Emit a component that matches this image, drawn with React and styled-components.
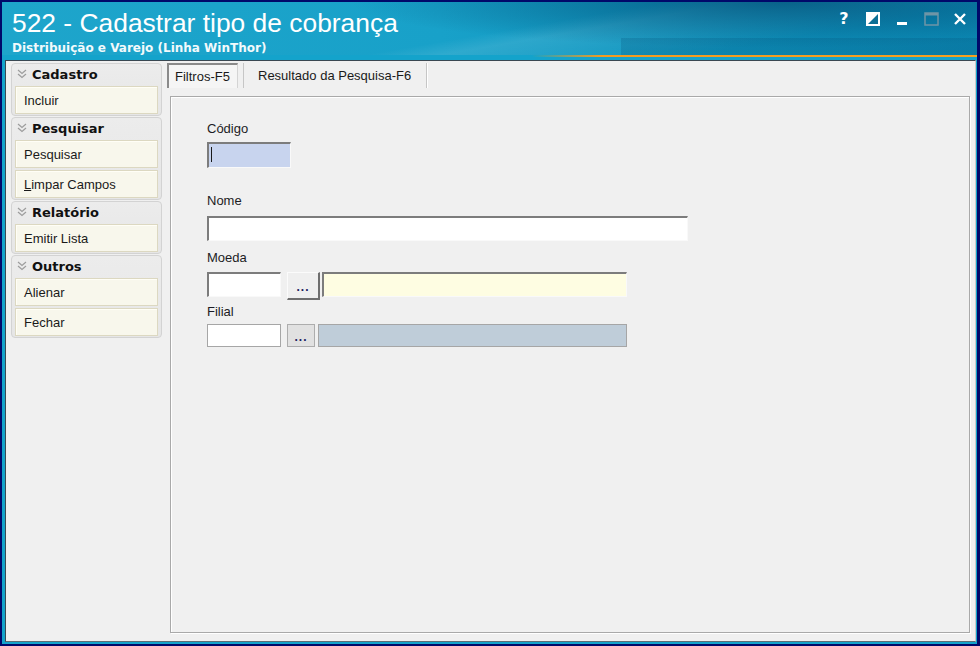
import React from 'react'
import styled, { createGlobalStyle } from 'styled-components'

const GlobalStyle = createGlobalStyle`
  html, body {
    margin: 0;
    padding: 0;
    overflow: hidden;
  }
  body {
    font-family: "Liberation Sans", Arial, sans-serif;
  }
  * {
    box-sizing: border-box;
  }
`

const Window = styled.div`
  width: 980px;
  height: 646px;
  background: #00086a;
  padding: 2px 3px 2px 2px;
  display: flex;
`

const Frame = styled.div`
  flex: 1;
  display: flex;
  flex-direction: column;
  background: #14a3cb;
  min-width: 0;
`

const TitleBar = styled.div`
  height: 53px;
  display: flex;
  justify-content: space-between;
  background:
    linear-gradient(rgba(0, 75, 115, 0.22), rgba(0, 75, 115, 0.22)) 619px 36px / 356px 17px no-repeat,
    radial-gradient(ellipse 430px 46px at 80% 0%, rgba(4, 88, 128, 0.85), rgba(4, 88, 128, 0) 100%),
    linear-gradient(170deg, rgba(255, 255, 255, 0) 52%, rgba(255, 255, 255, 0.1) 58%, rgba(255, 255, 255, 0) 78%),
    linear-gradient(to right, #1ea5cb 0%, #18a1c9 45%, #0f93bd 75%, #0b88b3 100%);
`

const TitleText = styled.div`
  padding: 8px 0 0 10px;
  color: #fff;
`

const AppName = styled.div`
  font-family: "Liberation Sans", Arial, sans-serif;
  font-size: 26.4px;
  line-height: 26px;
`

const SubName = styled.div`
  margin-top: 5px;
  font-family: "DejaVu Sans", Verdana, sans-serif;
  font-weight: bold;
  font-size: 12px;
  line-height: 14px;
  color: #f2fafc;
`

const Controls = styled.div`
  display: flex;
  gap: 7px;
  padding: 9px 6px 0 0;
  height: 30px;
`

const ControlButton = styled.div`
  width: 22px;
  height: 16px;
  display: flex;
  align-items: center;
  justify-content: center;
  color: #fff;
  font-family: "DejaVu Sans", sans-serif;
  font-weight: bold;
  font-size: 16px;
  line-height: 16px;
`

const Stripe = styled.div`
  height: 2px;
  background: linear-gradient(to right, rgba(242, 155, 33, 0) 0, rgba(242, 155, 33, 0) 530px, #f29b21 600px, #f6a020 100%);
`

const Body = styled.div`
  flex: 1;
  min-height: 0;
  margin: 3px 1px 2px 3px;
  background: #f0f0f0;
  border-top: 1px solid #3a4852;
  border-left: 1px solid #3a4852;
  border-bottom: 1px solid #5e6e75;
  border-right: 1px solid #c9c9c9;
  display: flex;
  padding: 2px 5px 8px 5px;
`

const Sidebar = styled.div`
  width: 151px;
  flex-shrink: 0;
  display: flex;
  flex-direction: column;
  gap: 1px;
`

const Group = styled.div`
  border: 1px solid #d3d3d3;
  border-radius: 4px;
  background: linear-gradient(#ececec, #e6e6e6);
  padding: 0 3px 1px 3px;
  display: flex;
  flex-direction: column;
  gap: 2px;
`

const GroupHeader = styled.div`
  height: 20px;
  display: flex;
  align-items: center;
  gap: 5px;
  padding-left: 2px;
  font-family: "DejaVu Sans", Verdana, sans-serif;
  font-weight: bold;
  font-size: 13px;
  color: #111;
`

const SideButton = styled.div`
  height: 28px;
  display: flex;
  align-items: center;
  padding-left: 8px;
  background: #f8f7ec;
  border: 1px solid #dcd8c1;
  box-shadow: inset 1px 1px 0 #fffef6;
  font-size: 13px;
  color: #1a1a1a;
  u {
    text-decoration: underline;
  }
`

const Main = styled.div`
  flex: 1;
  margin-left: 5px;
  display: flex;
  flex-direction: column;
  min-width: 0;
`

const TabList = styled.div`
  height: 25px;
  display: flex;
`

const Tab = styled.div`
  height: 25px;
  display: flex;
  align-items: center;
  font-size: 13px;
  color: #1a1a1a;
  width: ${p => p.$width}px;
  margin-left: ${p => (p.$active ? 0 : 5)}px;
  padding-left: ${p => (p.$active ? 6 : 14)}px;
  background: ${p => (p.$active ? '#f5f5f5' : 'transparent')};
  border-style: solid;
  border-width: ${p => (p.$active ? '2px 1px 0 2px' : '0 1px 0 1px')};
  border-color: ${p => (p.$active ? '#8a8a8a #d4d4d4 transparent #8a8a8a' : '#c6c6c6')};
  box-shadow: ${p => (p.$active ? 'none' : '1px 0 0 #fff')};
`

const Panel = styled.div`
  flex: 1;
  margin: 8px 0 0 3px;
  border: 1px solid #a9a9a9;
  box-shadow: inset 1px 1px 0 #fff, 1px 1px 0 #fff;
  padding: 24px 0 0 36px;
`

const FieldLabel = styled.div`
  font-size: 13px;
  line-height: 15px;
  color: #1c1c24;
  margin-top: ${p => p.$gap}px;
`

const Row = styled.div`
  display: flex;
  align-items: flex-start;
  margin-top: ${p => p.$gap}px;
`

const TextBox = styled.div`
  width: ${p => p.$width}px;
  height: ${p => p.$height}px;
  margin-top: ${p => p.$gap || 0}px;
  margin-left: ${p => p.$left || 0}px;
  background: ${p => p.$bg || '#fff'};
  border-style: solid;
  border-width: ${p => (p.$flat ? '1px' : '2px 1px 1px 2px')};
  border-color: ${p => (p.$flat ? '#a6a6a6' : '#7c7c7c #f9f9f9 #f9f9f9 #7c7c7c')};
`

const Caret = styled.span`
  display: block;
  width: 1px;
  height: 15px;
  margin: 3px 0 0 2px;
  background: #1a1a1a;
`

const DotsButton = styled.div`
  width: ${p => p.$width}px;
  height: ${p => p.$height}px;
  margin-left: 6px;
  display: flex;
  justify-content: center;
  align-items: flex-end;
  padding-bottom: ${p => (p.$flat ? 4 : 6)}px;
  font-size: 12px;
  line-height: 10px;
  font-weight: bold;
  color: #202060;
  letter-spacing: 1px;
  background: ${p => (p.$flat ? '#e1e1e1' : '#efefef')};
  border-style: solid;
  border-width: ${p => (p.$flat ? '1px' : '1px 2px 2px 1px')};
  border-color: ${p => (p.$flat ? '#adadad' : '#fbfbfb #6e6e6e #6e6e6e #fbfbfb')};
`

const Chevrons = () => (
  <svg width="10" height="10" viewBox="0 0 10 10">
    <path d="M1 1 L5 4.5 L9 1 M1 5 L5 8.5 L9 5" fill="none" stroke="#9d9d9d" strokeWidth="1.2" />
  </svg>
)

const HelpIcon = () => <ControlButton>?</ControlButton>

const ContrastIcon = () => (
  <ControlButton>
    <svg width="14" height="14" viewBox="0 0 14 14">
      <rect x="1" y="1" width="12" height="12" fill="#0b6f95" stroke="#fff" strokeWidth="2" />
      <path d="M1 1 H13 L1 13 Z" fill="#fff" />
    </svg>
  </ControlButton>
)

const MinimizeIcon = () => (
  <ControlButton>
    <svg width="12" height="14" viewBox="0 0 12 14">
      <rect x="1" y="10" width="10" height="3" fill="#fff" />
    </svg>
  </ControlButton>
)

const MaximizeIcon = () => (
  <ControlButton>
    <svg width="15" height="14" viewBox="0 0 15 14">
      <rect x="1" y="1" width="13" height="12" fill="none" stroke="#6f95a6" strokeWidth="1.5" />
      <rect x="1" y="1" width="13" height="2.5" fill="#6f95a6" />
    </svg>
  </ControlButton>
)

const CloseIcon = () => (
  <ControlButton>
    <svg width="14" height="14" viewBox="0 0 14 14">
      <path d="M2 2 L12 12 M12 2 L2 12" stroke="#fff" strokeWidth="2.4" />
    </svg>
  </ControlButton>
)

const menu = [
  { title: 'Cadastro', items: ['Incluir'] },
  { title: 'Pesquisar', items: ['Pesquisar', 'Limpar Campos'] },
  { title: 'Relatório', items: ['Emitir Lista'] },
  { title: 'Outros', items: ['Alienar', 'Fechar'] },
]

const ItemLabel = ({ text }) =>
  text === 'Limpar Campos' ? (
    <span>
      <u>L</u>impar Campos
    </span>
  ) : (
    <span>{text}</span>
  )

const App = () => {
  return (
    <>
      <GlobalStyle />
      <Window>
        <Frame>
          <TitleBar>
            <TitleText>
              <AppName>522 - Cadastrar tipo de cobrança</AppName>
              <SubName>Distribuição e Varejo (Linha WinThor)</SubName>
            </TitleText>
            <Controls>
              <HelpIcon />
              <ContrastIcon />
              <MinimizeIcon />
              <MaximizeIcon />
              <CloseIcon />
            </Controls>
          </TitleBar>
          <Stripe />
          <Body>
            <Sidebar>
              {menu.map(group => (
                <Group key={group.title}>
                  <GroupHeader>
                    <Chevrons />
                    {group.title}
                  </GroupHeader>
                  {group.items.map(item => (
                    <SideButton key={item}>
                      <ItemLabel text={item} />
                    </SideButton>
                  ))}
                </Group>
              ))}
            </Sidebar>
            <Main>
              <TabList>
                <Tab $active $width={71}>Filtros-F5</Tab>
                <Tab $width={184}>Resultado da Pesquisa-F6</Tab>
              </TabList>
              <Panel>
                <FieldLabel $gap={0}>Código</FieldLabel>
                <TextBox $width={84} $height={26} $gap={6} $bg="#c8d4ee">
                  <Caret />
                </TextBox>

                <FieldLabel $gap={25}>Nome</FieldLabel>
                <TextBox $width={481} $height={25} $gap={8} />

                <FieldLabel $gap={9}>Moeda</FieldLabel>
                <Row $gap={7}>
                  <TextBox $width={74} $height={25} />
                  <DotsButton $width={33} $height={28}>...</DotsButton>
                  <TextBox $width={305} $height={25} $left={2} $bg="#fefde2" />
                </Row>

                <FieldLabel $gap={4}>Filial</FieldLabel>
                <Row $gap={5}>
                  <TextBox $flat $width={74} $height={23} />
                  <DotsButton $flat $width={28} $height={23}>...</DotsButton>
                  <TextBox $flat $width={309} $height={23} $left={3} $bg="#bfcdd9" />
                </Row>
              </Panel>
            </Main>
          </Body>
        </Frame>
      </Window>
    </>
  )
}

export default App
